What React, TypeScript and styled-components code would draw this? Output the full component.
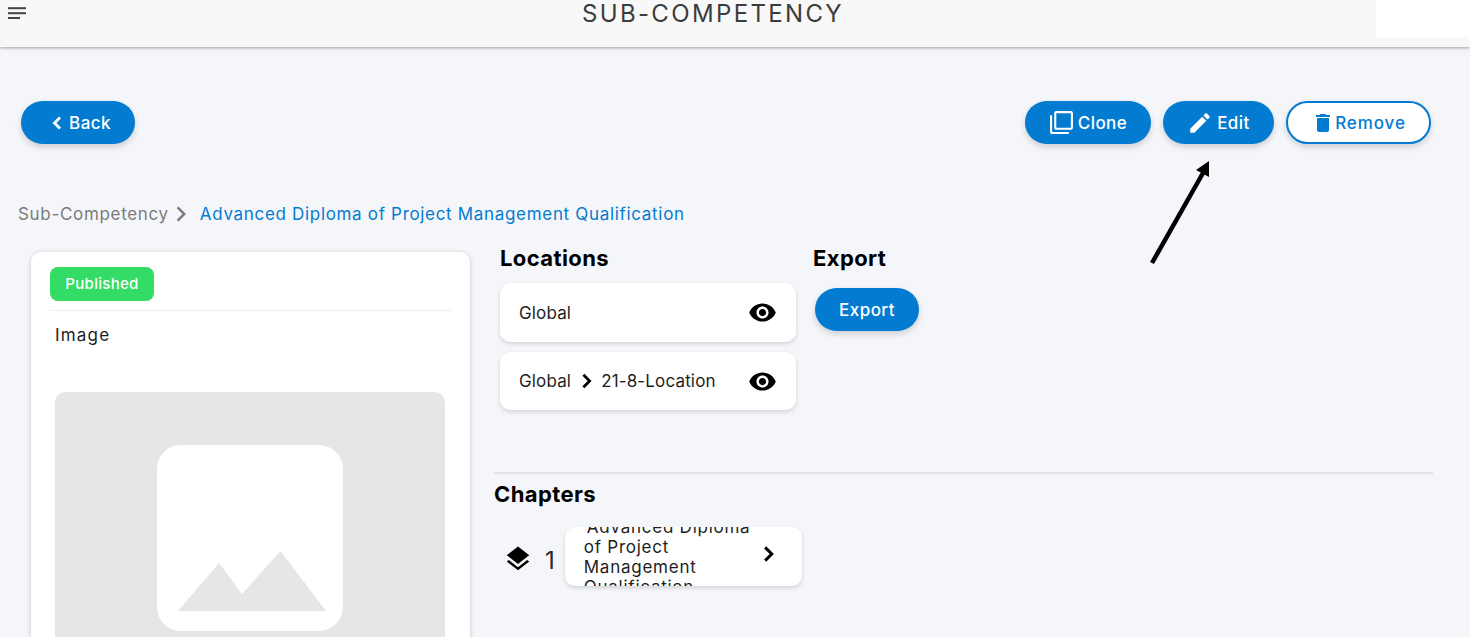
import styled, { createGlobalStyle } from "styled-components";

const GlobalStyle = createGlobalStyle`
    html, body {
        margin: 0;
        height: 100%;
        overflow: hidden;
        background: #f5f6fa;
        font-family: "Inter", "Noto Sans", sans-serif;
    }
    * { box-sizing: border-box; }
`;

const BLUE = "#037bd1";

const paths = {
    clone: "M3 5H1v16c0 1.1.9 2 2 2h16v-2H3V5zm18-4H7c-1.1 0-2 .9-2 2v14c0 1.1.9 2 2 2h14c1.1 0 2-.9 2-2V3c0-1.1-.9-2-2-2zm0 16H7V3h14v14z",
    edit: "M3 17.25V21h3.75L17.81 9.94l-3.75-3.75L3 17.25zM20.71 7.04c.39-.39.39-1.02 0-1.41l-2.34-2.34c-.39-.39-1.02-.39-1.41 0l-1.83 1.83 3.75 3.75 1.83-1.83z",
    trash: "M6 19c0 1.1.9 2 2 2h8c1.1 0 2-.9 2-2V7H6v12zM19 4h-3.5l-1-1h-5l-1 1H5v2h14V4z",
    eye: "M12 4.5C7 4.5 2.73 7.61 1 12c1.73 4.39 6 7.5 11 7.5s9.27-3.11 11-7.5c-1.73-4.39-6-7.5-11-7.5zM12 17c-2.76 0-5-2.24-5-5s2.24-5 5-5 5 2.24 5 5-2.24 5-5 5zm0-8c-1.66 0-3 1.34-3 3s1.34 3 3 3 3-1.34 3-3-1.34-3-3-3z",
    layers: "M11.99 18.54l-7.37-5.73L3 14.07l9 7 9-7-1.63-1.27-7.38 5.74zM12 16l7.36-5.73L21 9l-9-7-9 7 1.63 1.27L12 16z",
    chevron: "M10 6L8.59 7.41 13.17 12l-4.58 4.59L10 18l6-6z",
    // heavier than the stock chevron, the reference has these quite bold
    chevronBold: "M9.6 5.4 L7.8 7.2 L12.6 12 L7.8 16.8 L9.6 18.6 L16.2 12z",
    back: "M16 7.4 L14 5.5 L7.5 12 L14 18.5 L16 16.6 L11.4 12z",
};

function Icon({ d, size }: { d: string; size: number }) {
    return (
        <svg width={size} height={size} viewBox="0 0 24 24" fill="currentColor" style={{ flexShrink: 0 }}>
            <path d={d} />
        </svg>
    );
}

function App() {
    return (
        <Page>
            <GlobalStyle />
            <Header>
                <MenuButton>
                    <svg width="18" height="12" viewBox="0 0 18 12" fill="#444">
                        <rect x="0" y="0.2" width="18" height="2" />
                        <rect x="0" y="5.2" width="18" height="2" />
                        <rect x="0" y="10" width="12" height="2" />
                    </svg>
                </MenuButton>
                <Title>SUB-COMPETENCY</Title>
                <LogoBox />
            </Header>

            <Toolbar>
                <PillButton $width={114} $gap={0}>
                    <Icon d={paths.back} size={24} />
                    Back
                </PillButton>
                <Actions>
                    <PillButton $width={126} $gap={4}>
                        <Icon d={paths.clone} size={25} />
                        Clone
                    </PillButton>
                    <PillButton $width={111} $gap={4}>
                        <Icon d={paths.edit} size={26} />
                        Edit
                    </PillButton>
                    <PillButton $width={145} $gap={0} $outline>
                        <Icon d={paths.trash} size={24} />
                        <RemoveLabel>Remove</RemoveLabel>
                    </PillButton>
                </Actions>
            </Toolbar>

            <Breadcrumb>
                <CrumbRoot>Sub-Competency</CrumbRoot>
                <CrumbArrow>
                    <Icon d={paths.chevron} size={30} />
                </CrumbArrow>
                <CrumbCurrent>Advanced Diploma of Project Management Qualification</CrumbCurrent>
            </Breadcrumb>

            <Content>
                <InfoCard>
                    <Badge>Published</Badge>
                    <CardRule />
                    <ImageLabel>Image</ImageLabel>
                    <ImageFrame>
                        <svg width="186" height="186" viewBox="0 0 186 186">
                            <rect width="186" height="186" rx="24" fill="#fff" />
                            <path d="M21 166 L62 118 L85 149 L123.5 106 L169 166 Z" fill="#e6e6e6" />
                        </svg>
                    </ImageFrame>
                </InfoCard>

                <Details>
                    <TopRow>
                        <LocationsColumn>
                            <ColumnTitle>Locations</ColumnTitle>
                            <LocationRow $height={59}>
                                <LocationName>Global</LocationName>
                                <Icon d={paths.eye} size={29} />
                            </LocationRow>
                            <LocationRow $height={58}>
                                <LocationName>
                                    Global
                                    <LocationArrow>
                                        <Icon d={paths.chevronBold} size={26} />
                                    </LocationArrow>
                                    21-8-Location
                                </LocationName>
                                <Icon d={paths.eye} size={29} />
                            </LocationRow>
                        </LocationsColumn>
                        <ExportColumn>
                            <ColumnTitle>Export</ColumnTitle>
                            <ExportButton $width={104} $gap={0}>Export</ExportButton>
                        </ExportColumn>
                    </TopRow>
                    <Divider />
                    <ChaptersTitle>Chapters</ChaptersTitle>
                    <ChapterRow>
                        <LayersWrap>
                            <Icon d={paths.layers} size={30} />
                        </LayersWrap>
                        <ChapterIndex>1</ChapterIndex>
                        <ChapterCard>
                            <ChapterText>Advanced Diploma of Project Management Qualification</ChapterText>
                            <ChapterArrow>
                                <Icon d={paths.chevronBold} size={28} />
                            </ChapterArrow>
                        </ChapterCard>
                    </ChapterRow>
                </Details>
            </Content>

            <Annotation width="70" height="112" viewBox="0 0 70 112">
                <path d="M3 107 L54 17" stroke="#000" strokeWidth="4.5" fill="none" />
                <path d="M60 5 L60 21 L47 14 Z" fill="#000" />
            </Annotation>
        </Page>
    );
}

const Page = styled.div`
    position: relative;
    height: 637px;
    overflow: hidden;
    background: #f5f6fa;
`;
const Header = styled.header`
    height: 47px;
    background: #f8f8f8;
    box-shadow: 0 1px 3px rgba(0, 0, 0, 0.35);
    display: flex;
    justify-content: space-between;
    align-items: flex-start;
    padding-left: 8px;
`;
const MenuButton = styled.div`
    padding-top: 7px;
    line-height: 0;
`;
const Title = styled.h1`
    margin: 0 0 0 24px;
    font-size: 24px;
    line-height: 28px;
    font-weight: 400;
    letter-spacing: 2.35px;
    color: #3c3c3c;
`;
const LogoBox = styled.div`
    width: 94px;
    height: 37px;
    background: #fff;
`;
const Toolbar = styled.div`
    display: flex;
    justify-content: space-between;
    margin-top: 54px;
    padding: 0 39px 0 21px;
`;
const Actions = styled.div`
    display: flex;
    gap: 12px;
`;
const PillButton = styled.button<{ $width: number; $gap: number; $outline?: boolean }>`
    width: ${props => props.$width}px;
    height: 43px;
    border-radius: 22px;
    border: ${props => (props.$outline ? `2px solid ${BLUE}` : "none")};
    background: ${props => (props.$outline ? "#fff" : BLUE)};
    color: ${props => (props.$outline ? BLUE : "#fff")};
    box-shadow: 0 3px 6px rgba(0, 0, 0, 0.16);
    display: flex;
    align-items: center;
    justify-content: center;
    gap: ${props => props.$gap}px;
    padding: 0;
    font-family: inherit;
    font-size: 17px;
    font-weight: 500;
    letter-spacing: 0.45px;
`;
const RemoveLabel = styled.span`
    letter-spacing: 0.9px;
`;
const Breadcrumb = styled.nav`
    display: flex;
    align-items: center;
    height: 26px;
    margin-top: 57px;
    padding-left: 18px;
    font-size: 17px;
    letter-spacing: 0.68px;
`;
const CrumbRoot = styled.span`
    color: #7b7b7b;
`;
const CrumbArrow = styled.span`
    display: flex;
    color: #7b7b7b;
    margin: 0 4px 0 -3px;
`;
const CrumbCurrent = styled.span`
    color: ${BLUE};
`;
const Content = styled.div`
    display: flex;
    align-items: flex-start;
    margin-top: 25px;
    padding-left: 31px;
`;
const InfoCard = styled.section`
    width: 439px;
    height: 500px;
    flex-shrink: 0;
    background: #fff;
    border-radius: 10px;
    box-shadow: 0 1px 5px rgba(0, 0, 0, 0.2);
    padding: 15px 19px;
`;
const Badge = styled.div`
    width: 104px;
    height: 34px;
    border-radius: 8px;
    background: #33dc65;
    color: #fff;
    font-size: 15px;
    font-weight: 500;
    letter-spacing: 0.3px;
    padding-bottom: 1px;
    display: flex;
    align-items: center;
    justify-content: center;
`;
const CardRule = styled.div`
    height: 1px;
    background: #eeeeee;
    margin-top: 9px;
`;
const ImageLabel = styled.div`
    margin: 13px 0 0 5px;
    font-size: 17px;
    line-height: 22px;
    color: #1e1e1e;
    letter-spacing: 1.2px;
`;
const ImageFrame = styled.div`
    width: 390px;
    height: 400px;
    margin: 46px 0 0 5px;
    background: #e6e6e6;
    border-radius: 10px;
    padding-top: 53px;
    display: flex;
    justify-content: center;
    align-items: flex-start;
`;
const Details = styled.div`
    width: 939px;
    margin-left: 24px;
`;
const TopRow = styled.div`
    display: flex;
    padding-left: 6px;
    height: 220px;
`;
const LocationsColumn = styled.div`
    width: 296px;
`;
const ExportColumn = styled.div`
    margin-left: 17px;
`;
const ColumnTitle = styled.h2`
    margin: -7px 0 11px;
    font-size: 22px;
    line-height: 27px;
    font-weight: 700;
    letter-spacing: 0.4px;
    color: #000;
`;
const LocationRow = styled.div<{ $height: number }>`
    height: ${props => props.$height}px;
    background: #fff;
    border-radius: 10px;
    box-shadow: 0 2px 4px rgba(0, 0, 0, 0.14);
    display: flex;
    align-items: center;
    justify-content: space-between;
    padding: 0 19px;
    margin-bottom: 10px;
    color: #000;
`;
const LocationName = styled.span`
    display: flex;
    align-items: center;
    font-size: 17px;
    color: #1e1e1e;
    letter-spacing: 0.15px;
`;
const LocationArrow = styled.span`
    display: flex;
    color: #000;
    margin: 0 1px 0 3px;
`;
const ExportButton = styled(PillButton)`
    margin: 16px 0 0 2px;
`;
const Divider = styled.div`
    height: 2px;
    background: #e3e3e6;
`;
const ChaptersTitle = styled.h2`
    margin: 7px 0 0;
    font-size: 22px;
    line-height: 27px;
    font-weight: 700;
    letter-spacing: 0.4px;
    color: #000;
`;
const ChapterRow = styled.div`
    display: flex;
    align-items: center;
    margin-top: 19px;
    color: #000;
`;
const LayersWrap = styled.div`
    display: flex;
    margin: 5px 0 0 9px;
`;
const ChapterIndex = styled.span`
    font-size: 24px;
    margin: 8px 10px 0 12px;
    color: #2a2a2a;
`;
const ChapterCard = styled.div`
    width: 237px;
    height: 59px;
    flex-shrink: 0;
    background: #fff;
    border-radius: 10px;
    box-shadow: 0 2px 4px rgba(0, 0, 0, 0.14);
    display: flex;
    align-items: center;
    justify-content: space-between;
    padding: 0 19px;
    overflow: hidden;
`;
const ChapterText = styled.div`
    width: 172px;
    font-size: 17px;
    line-height: 20px;
    text-indent: 3px;
    color: #1e1e1e;
    letter-spacing: 0.75px;
`;
const ChapterArrow = styled.span`
    display: flex;
    margin-top: -5px;
`;
const Annotation = styled.svg`
    position: absolute;
    left: 1149px;
    top: 156px;
`;

export default App;
